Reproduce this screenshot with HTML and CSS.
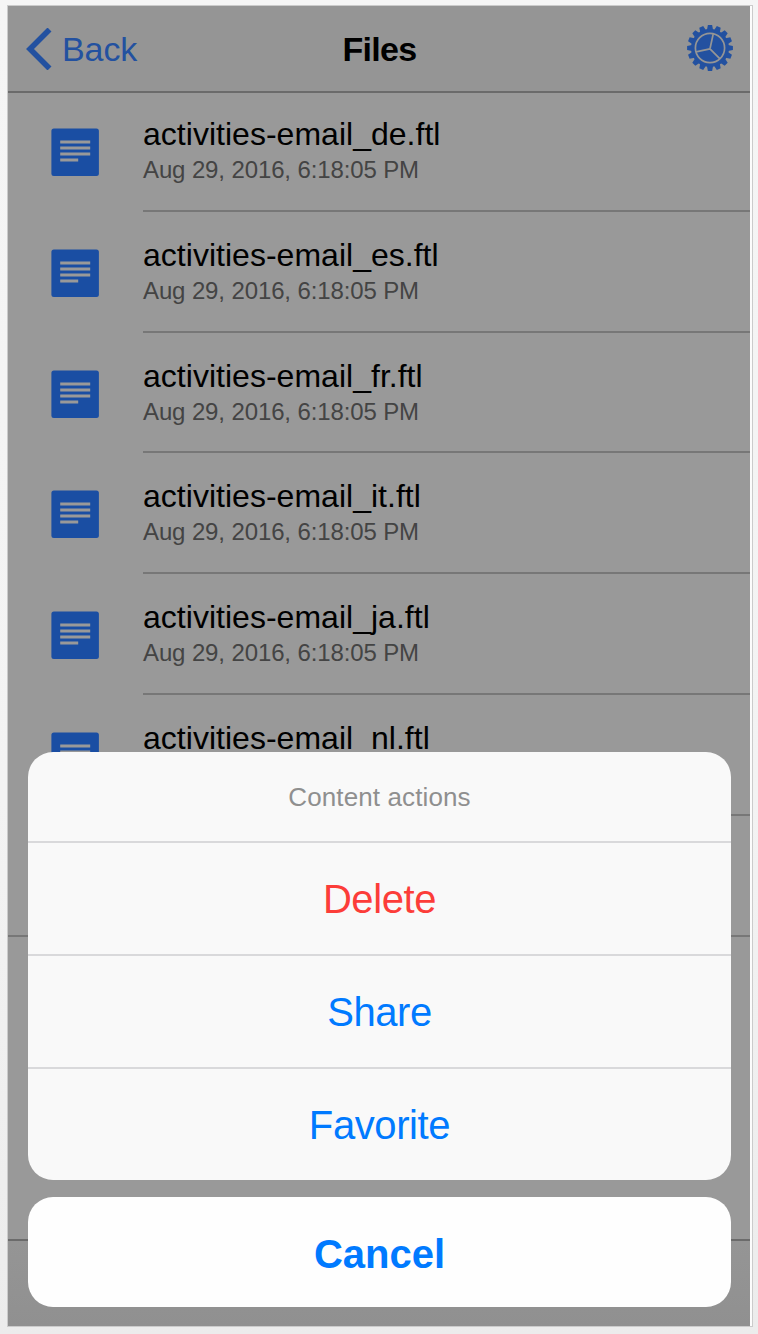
FILE: index.html
```html
<!DOCTYPE html>
<html lang="en">
<head>
<meta charset="utf-8">
<title>Files</title>
<link rel="stylesheet" href="styles.css">
</head>
<body>
<svg class="defs" width="0" height="0" aria-hidden="true">
  <symbol id="doc" viewBox="0 0 48 48">
    <rect x=".4" y=".6" width="47.500" height="47.400" rx="2.500" fill="#1a4ea3"/>
    <path d="M9.200 14h30M9.200 20h30M9.200 26h30M9.200 32h18" stroke="#999" stroke-width="2.800"/>
  </symbol>
  <symbol id="tooth" viewBox="-23 -23 46 46"><path d="M-3.100-18-2.100-22.900h4.200L3.100-18z" fill="#2351a0"/></symbol>
</svg>
<div class="frame">
  <div class="screen">
    <header class="navbar">
      <div class="back">
        <svg width="26" height="42" viewBox="0 0 26 42"><path d="M23.500 1.500 4 21l19.500 19.500" fill="none" stroke="#2351a0" stroke-width="5.600"/></svg>
        <span class="back-label">Back</span>
      </div>
      <h1 class="title">Files</h1>
      <svg class="gear" width="46" height="46" viewBox="-23 -23 46 46">
        <circle r="19" fill="#2351a0"/>
        <g id="pair"><g id="quad"><g id="half">
          <path id="t" d="M-3.100-18-2.100-22.900h4.200L3.100-18z" fill="#2351a0"/>
          <use href="#t" transform="rotate(22.500)"/>
        </g><use href="#half" transform="rotate(45)"/></g><use href="#quad" transform="rotate(90)"/></g>
        <use href="#pair" transform="rotate(180)"/>
        <circle r="14.600" fill="none" stroke="#959595" stroke-width="1.700"/>
        <path d="M0 .8 3.200-14M0 .8-14 3.800M0 .8 10 10.800" stroke="#959595" stroke-width="1.700"/>
      </svg>
    </header>
    <ul class="list">
      <li class="row"><svg class="doc"><use href="#doc"/></svg><div class="info"><span class="name">activities-email_de.ftl</span><span class="date">Aug 29, 2016, 6:18:05 PM</span></div></li>
      <li class="row"><svg class="doc"><use href="#doc"/></svg><div class="info"><span class="name">activities-email_es.ftl</span><span class="date">Aug 29, 2016, 6:18:05 PM</span></div></li>
      <li class="row"><svg class="doc"><use href="#doc"/></svg><div class="info"><span class="name">activities-email_fr.ftl</span><span class="date">Aug 29, 2016, 6:18:05 PM</span></div></li>
      <li class="row"><svg class="doc"><use href="#doc"/></svg><div class="info"><span class="name">activities-email_it.ftl</span><span class="date">Aug 29, 2016, 6:18:05 PM</span></div></li>
      <li class="row"><svg class="doc"><use href="#doc"/></svg><div class="info"><span class="name">activities-email_ja.ftl</span><span class="date">Aug 29, 2016, 6:18:05 PM</span></div></li>
      <li class="row"><svg class="doc"><use href="#doc"/></svg><div class="info"><span class="name">activities-email_nl.ftl</span></div></li>
      <li class="row last"></li>
    </ul>
    <footer class="toolbar"></footer>
    <div class="sheet">
      <div class="actions">
        <div class="heading">Content actions</div>
        <div class="action delete">Delete</div>
        <div class="action share">Share</div>
        <div class="action favorite">Favorite</div>
      </div>
      <div class="cancel"><span>Cancel</span></div>
    </div>
  </div>
</div>
</body>
</html>
```
FILE: styles.css
```css
* { box-sizing: border-box; }
body {
  margin: 0;
  height: 1334px;
  padding: 5px 0 0 7px;
  overflow: hidden;
  background: linear-gradient(#f5f5f5, #f3f3f3 60%, #ececec);
  font-family: "Liberation Sans", Arial, sans-serif;
}
.defs { position: absolute; }
.frame {
  width: 746px;
  height: 1322px;
  padding-right: 2px;
  background: #fcfcfc;
  border: 1px solid #cbcbcb;
}
.screen {
  position: relative;
  display: flex;
  flex-direction: column;
  width: 742px;
  height: 1320px;
  overflow: hidden;
  background: #999;
}
.navbar {
  display: grid;
  grid-template-columns: 1fr auto 1fr;
  align-items: center;
  height: 87px;
  padding: 0 17px 0 18px;
  background: #959595;
  border-bottom: 2px solid #6b6b6b;
}
.back { display: flex; align-items: center; gap: 10px; color: #2351a0; }
.back-label { font-size: 34px; line-height: 40px; letter-spacing: -0.1px; }
.title { margin: 0; font-size: 34px; line-height: 40px; font-weight: 700; letter-spacing: -0.7px; color: #000; }
.gear { justify-self: end; margin-bottom: 1px; }
.list { margin: -2px 0 0; padding: 0; list-style: none; }
.row { display: flex; height: 120.8px; padding-left: 43px; }
.doc { flex: none; width: 48px; height: 48px; margin-top: 37px; }
.info {
  flex: 1;
  display: flex;
  flex-direction: column;
  margin-left: 44px;
  padding-top: 25px;
  border-bottom: 2px solid #777;
}
.name { font-size: 32px; line-height: 36px; letter-spacing: 0.02px; color: #000; }
.date { font-size: 24px; line-height: 36px; letter-spacing: -0.12px; color: #444; }
.row.last { border-bottom: 2px solid #777; }
.toolbar { height: 87px; margin-top: auto; border-top: 2px solid #6b6b6b; background: linear-gradient(#959595, #909090); }
.sheet { position: absolute; left: 20px; top: 746px; width: 703px; }
.actions, .cancel { border-radius: 25px; overflow: hidden; text-align: center; }
.actions { height: 428px; background: #f9f9f9; }
.heading { height: 89px; font-size: 26px; line-height: 90px; letter-spacing: 0.12px; color: #8f8f8f; }
.action {
  height: 113px;
  border-top: 2px solid #d9d9db;
  font-size: 40px;
  line-height: 113px;
  letter-spacing: -0.4px;
  color: #007aff;
}
.action.delete { color: #fc3d39; }
.cancel {
  height: 110px;
  margin-top: 16.5px;
  background: #fefefe;
  font-size: 40px;
  line-height: 114px;
  font-weight: 700;
  color: #007aff;
}
```
